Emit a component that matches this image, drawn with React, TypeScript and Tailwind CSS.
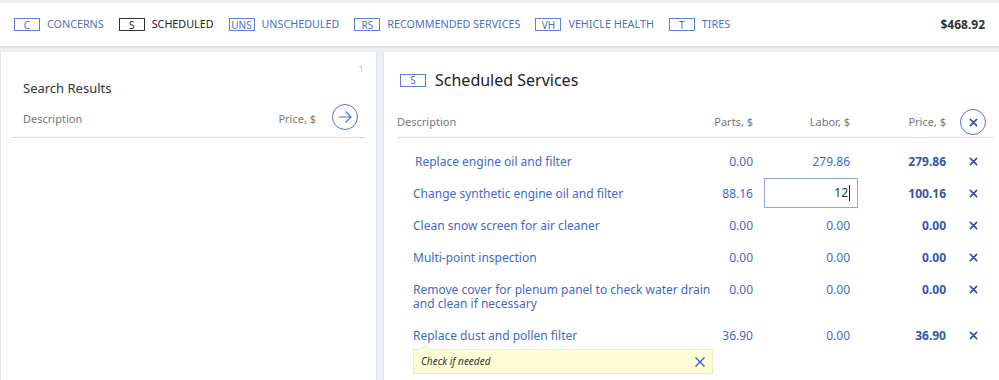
import React from 'react';

type Service = {
  id: number;
  description: string;
  parts: string;
  labor: string;
  price: string;
  editing?: boolean;
  note?: string;
};

const services: Service[] = [
  { id: 1, description: 'Replace engine oil and filter', parts: '0.00', labor: '279.86', price: '279.86' },
  { id: 2, description: 'Change synthetic engine oil and filter', parts: '88.16', labor: '12', price: '100.16', editing: true },
  { id: 3, description: 'Clean snow screen for air cleaner', parts: '0.00', labor: '0.00', price: '0.00' },
  { id: 4, description: 'Multi-point inspection', parts: '0.00', labor: '0.00', price: '0.00' },
  {
    id: 5,
    description: 'Remove cover for plenum panel to check water drain and clean if necessary',
    parts: '0.00',
    labor: '0.00',
    price: '0.00',
  },
  { id: 6, description: 'Replace dust and pollen filter', parts: '36.90', labor: '0.00', price: '36.90', note: 'Check if needed' },
];

const tabs = [
  { code: 'C', label: 'CONCERNS' },
  { code: 'S', label: 'SCHEDULED', active: true },
  { code: 'UNS', label: 'UNSCHEDULED' },
  { code: 'RS', label: 'RECOMMENDED SERVICES' },
  { code: 'VH', label: 'VEHICLE HEALTH' },
  { code: 'T', label: 'TIRES' },
];

function CodeBox(props: { code: string; dark?: boolean }) {
  return (
    <span
      className={`inline-flex h-[13px] w-[26px] items-center justify-center border text-[10px] leading-none ${
        props.dark ? 'border-[#333] text-[#222]' : 'border-[#5d80d2] text-[#4a6fc9]'
      }`}
    >
      {props.code}
    </span>
  );
}

function XIcon(props: { size?: number; className?: string }) {
  const s = props.size ?? 10;
  return (
    <svg width={s} height={s} viewBox="0 0 10 10" className={props.className}>
      <path d="M1.5 1.5 L8.5 8.5 M8.5 1.5 L1.5 8.5" stroke="currentColor" strokeWidth="1.8" strokeLinecap="round" />
    </svg>
  );
}

const rowGrid = 'grid grid-cols-[1fr_56px_97px_96px_47px]';

export default function App() {
  return (
    <div className="h-[380px] w-[999px] overflow-hidden bg-[#edf0f3] font-['Noto_Sans',sans-serif]">
      {/* top nav */}
      <div className="mt-[3px] flex h-[45px] items-center border-b-2 border-[#dde1e5] bg-white pl-[14px] pr-[14px]">
        <div className="flex flex-1 items-center gap-[15px]">
          {tabs.map(t => (
            <div key={t.code} className="flex items-center gap-[7px]">
              <CodeBox code={t.code} dark={t.active} />
              <span className={`text-[10.75px] ${t.active ? 'text-[#222]' : 'text-[#4a6fc9]'}`}>{t.label}</span>
            </div>
          ))}
        </div>
        <span className="text-[12px] font-bold text-[#333]">$468.92</span>
      </div>

      <div className="mt-[4px] flex h-[330px] gap-[6px]">
        {/* search results */}
        <div className="relative w-[377px] border-r border-l border-[#e2e6ea] bg-white px-[11px] pt-[24px]">
          <span className="absolute top-[10px] right-[12px] text-[7px] text-[#999]">┐</span>
          <h2 className="pl-[11px] text-[13px] leading-[24px] text-[#333]">Search Results</h2>
          <div className="mt-[4px] flex items-center border-b border-[#d6dce3] pb-[7px] pl-[11px] pr-[7px] text-[11px] text-[#777]">
            <span className="flex-1 pt-[4px]">Description</span>
            <span className="pt-[4px]">Price, $</span>
            <button className="ml-4 flex h-[26px] w-[26px] items-center justify-center rounded-full border border-[#4f75cf] text-[#4f75cf]">
              <svg width="16" height="16" viewBox="0 0 16 16">
                <path d="M2 8 H14 M8.5 2.5 L14 8 L8.5 13.5" fill="none" stroke="currentColor" strokeWidth="1.2" />
              </svg>
            </button>
          </div>
        </div>

        {/* scheduled services */}
        <div className="flex-1 border-l border-[#e2e6ea] bg-white pt-[18px] pl-[13px] pr-[6px]">
          <div className="flex items-center gap-[9px] pl-[3px]">
            <CodeBox code="S" />
            <h2 className="text-[16px] leading-[20px] text-[#222]">Scheduled Services</h2>
          </div>

          <div className={`${rowGrid} mt-[19px] items-center border-b border-[#d6dce3] pb-[2px] text-[11px] text-[#777]`}>
            <span className="pt-[1px]">Description</span>
            <span className="pt-[1px] text-right">Parts, $</span>
            <span className="pt-[1px] text-right">Labor, $</span>
            <span className="pt-[1px] text-right">Price, $</span>
            <div className="flex justify-end pr-[7px]">
              <button className="flex h-[26px] w-[26px] items-center justify-center rounded-full border border-[#4f75cf] text-[#2d50aa]">
                <XIcon size={9} />
              </button>
            </div>
          </div>

          <div className="pt-[8px]">
            {services.map(s => (
              <div key={s.id} className={s.note ? 'pt-[9px]' : 'py-[9px]'}>
                <div className={`${rowGrid} items-start text-[12px] leading-[14px]`}>
                  <span className={`-mr-[28px] text-[#4169c8] ${s.id === 1 ? 'pl-[18px]' : 'pl-4'}`}>
                    {s.description}
                  </span>
                  <span className="text-right text-[#4169c8]">{s.parts}</span>
                  {s.editing ? (
                    <div className="flex justify-end">
                      <div className="-mt-[9px] -mr-[8px] -mb-[7px] flex h-[30px] w-[94px] items-center justify-end border border-[#8ea8dc] pr-[7px] text-[#333]">
                        12<span className="ml-[1px] h-[16px] w-[1px] bg-[#222]" />
                      </div>
                    </div>
                  ) : (
                    <span className="text-right text-[#4169c8]">{s.labor}</span>
                  )}
                  <span className="text-right font-bold text-[#2f56b5]">{s.price}</span>
                  <div className="flex justify-end pr-[7px]">
                    <span className="flex w-[26px] justify-center pt-[2px] text-[#2d50aa]">
                      <XIcon size={9} />
                    </span>
                  </div>
                </div>
                {s.note && (
                  <div className="relative mt-[6px] ml-4 flex h-[25px] w-[300px] items-center border border-[#ececc4] bg-[#fdfdd6] pl-[7px] pr-[6px]">
                    <span className="absolute -top-[4px] left-[8px] h-[7px] w-[7px] rotate-45 border-t border-l border-[#ececc4] bg-[#fdfdd6]" />
                    <span className="flex-1 text-[10px] italic text-[#333]">{s.note}</span>
                    <svg width="12" height="12" viewBox="0 0 12 12" className="text-[#2f5fcf]">
                      <path d="M1.5 1.5 L10.5 10.5 M10.5 1.5 L1.5 10.5" stroke="currentColor" strokeWidth="1.4" />
                    </svg>
                  </div>
                )}
              </div>
            ))}
          </div>
        </div>
      </div>
    </div>
  );
}
